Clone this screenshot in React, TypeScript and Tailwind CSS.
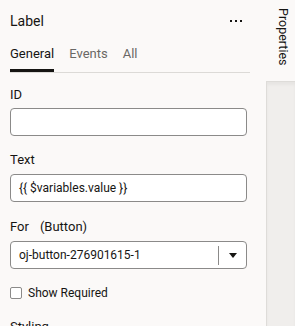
import React from "react";

export default function App() {
  const font = { fontFamily: 'Roboto, "Liberation Sans", sans-serif' };
  return (
    <div className="flex h-[326px] w-[295px] overflow-hidden bg-[#fbf9f8] text-[#161513]" style={font}>
      <div className="flex w-[266px] shrink-0 flex-col pl-[10px] pr-[16px]">
        <div className="mt-[11px] flex h-[20px] items-center justify-between">
          <span className="text-[14px] leading-[20px]">Label</span>
          <span className="mr-[8px] flex items-center gap-[3px]">
            <span className="block h-[2px] w-[2px] bg-[#161513]" />
            <span className="block h-[2px] w-[2px] bg-[#161513]" />
            <span className="block h-[2px] w-[2px] bg-[#161513]" />
          </span>
        </div>
        <div className="mt-[14px] flex border-b border-[#dcdad7] text-[13px] leading-[18px]">
          <div className="border-b-[3px] border-[#161513] pb-[6px]">General</div>
          <div className="ml-[15px] pb-[9px] text-[#6a6865]">Events</div>
          <div className="ml-[15px] pb-[9px] text-[#6a6865]">All</div>
        </div>
        <div className="flex w-[237px] flex-col text-[13px] leading-[16px]">
          <div className="mt-[14px]">ID</div>
          <div className="mt-[5px] h-[28px] rounded-[4px] border border-[#8b8a89] bg-white" />
          <div className="mt-[16px]">Text</div>
          <div className="mt-[6px] flex h-[28px] items-center rounded-[4px] border border-[#8b8a89] bg-white px-[8px] text-[12px]">
            {"{{ $variables.value }}"}
          </div>
          <div className="mt-[17px] flex">
            <span>For</span>
            <span className="ml-[11px]">(Button)</span>
          </div>
          <div className="mt-[6px] flex h-[28px] items-center rounded-[4px] border border-[#8b8a89] bg-white text-[12px]">
            <span className="flex-1 px-[8px]">oj-button-276901615-1</span>
            <span className="h-[19px] w-px bg-[#8b8a89]" />
            <span className="flex w-[27px] justify-center">
              <svg width="8" height="5" viewBox="0 0 8 5">
                <path d="M0 0 H8 L4 5 Z" fill="#161513" />
              </svg>
            </span>
          </div>
          <div className="mt-[16px] flex items-center">
            <span className="block h-[12px] w-[12px] rounded-[2px] border border-[#8b8a89] bg-white" />
            <span className="ml-[6px] text-[12px]">Show Required</span>
          </div>
          <div className="mt-[18px]">Styling</div>
        </div>
      </div>
      <div className="flex w-[29px] flex-col">
        <div className="flex h-[81px] justify-center pl-[4px] pt-[8px]">
          <span className="text-[12.5px] leading-[14px] [writing-mode:vertical-rl]">Properties</span>
        </div>
        <div className="flex-1 border-l border-t border-[#dedcd9] bg-[#f0eeec] shadow-[inset_0_3px_3px_rgba(0,0,0,0.04)]" />
      </div>
    </div>
  );
}
